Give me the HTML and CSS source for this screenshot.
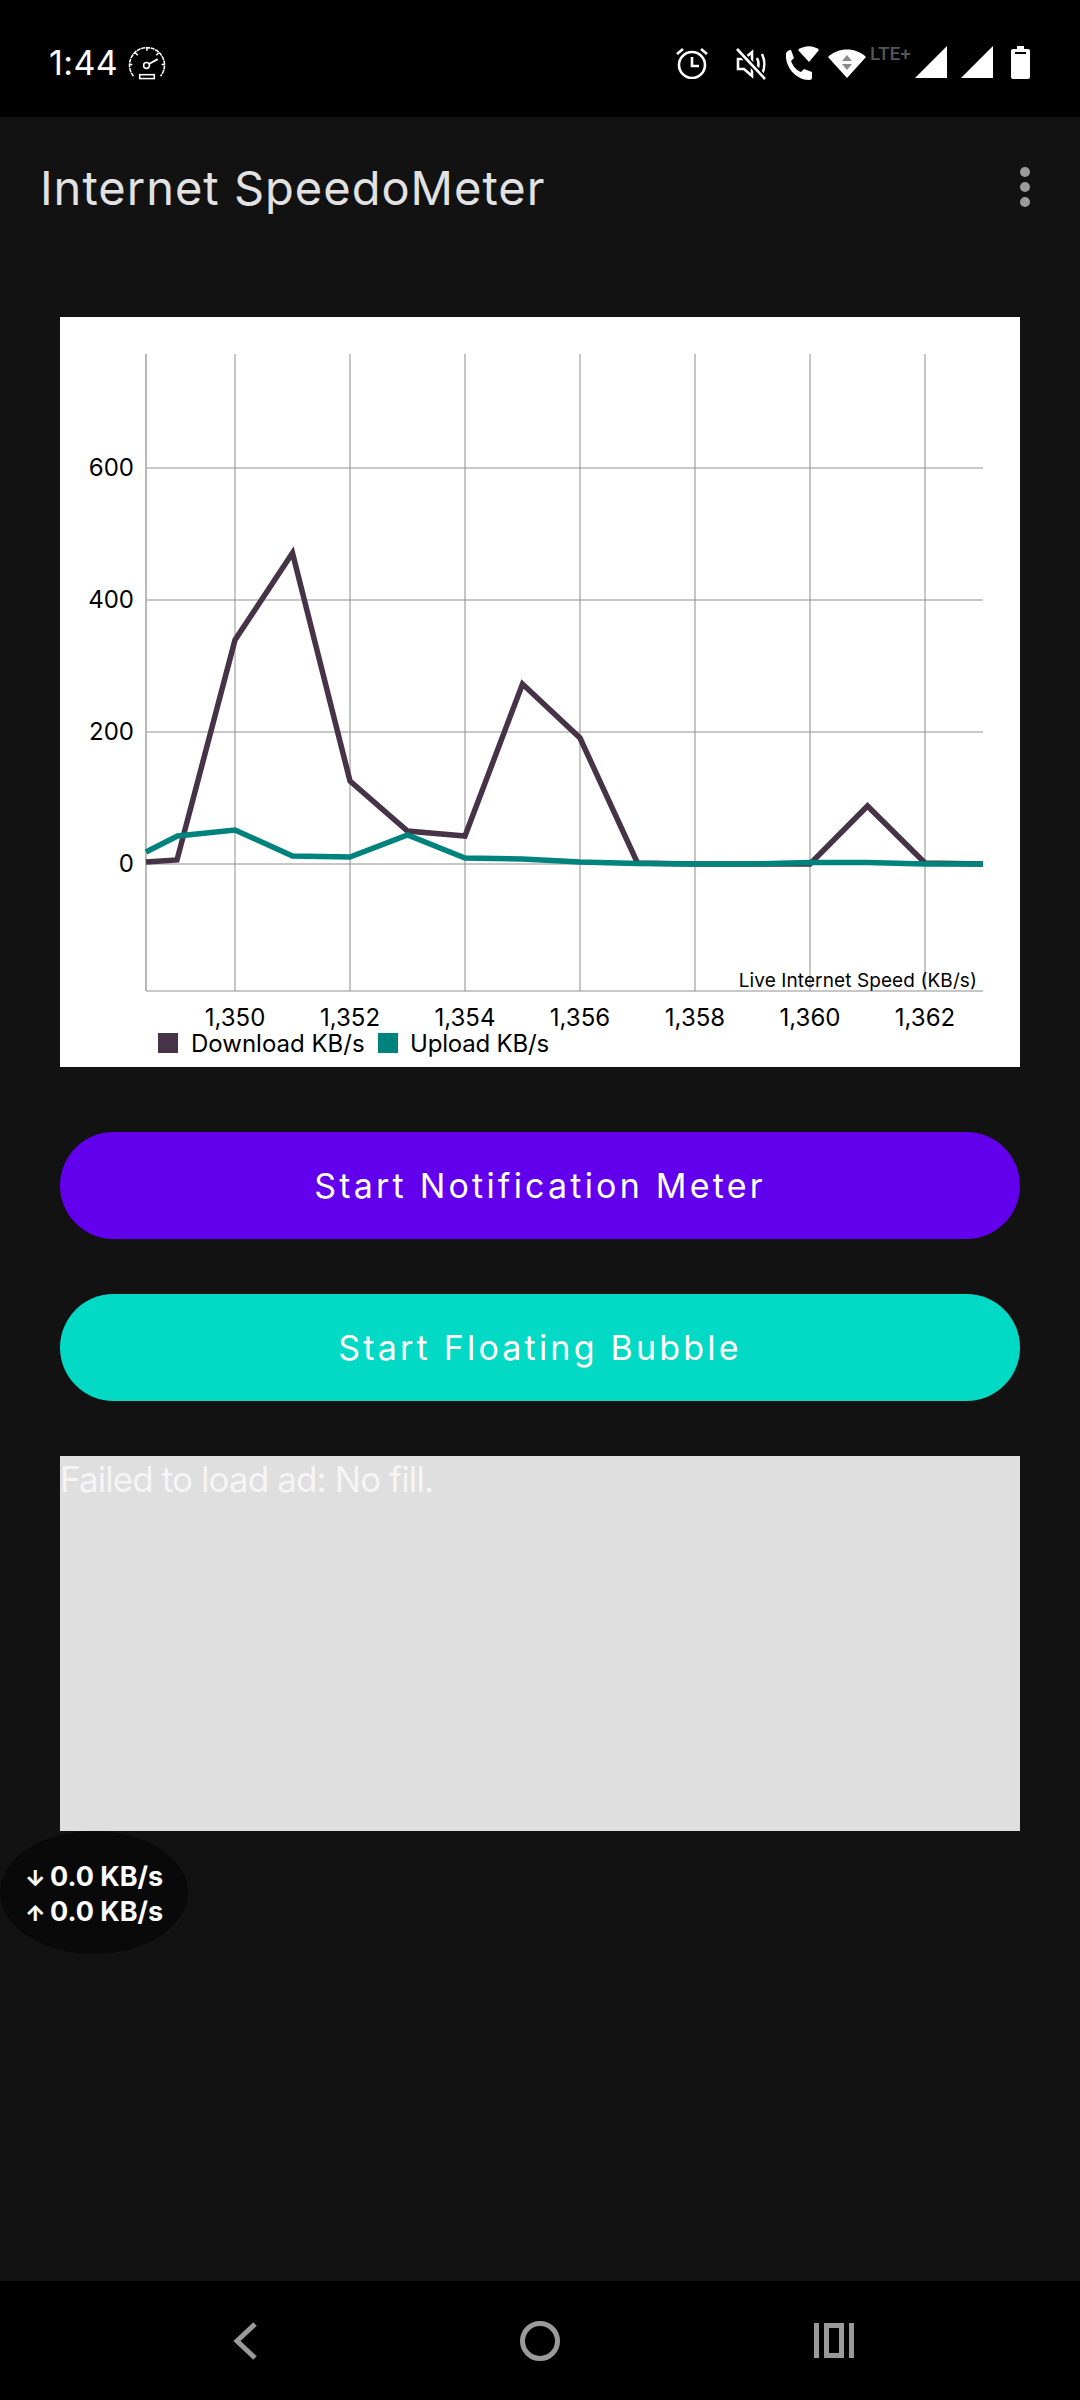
FILE: index.html
```html
<!DOCTYPE html>
<html lang="en">
<head>
  <meta charset="UTF-8">
  <meta name="viewport" content="width=device-width, initial-scale=1.0">
  <title>Internet SpeedoMeter</title>
  <link rel="stylesheet" href="styles.css">
</head>
<body>
  <div class="statusbar">
    <div class="status-left">
      <span class="clock">1:44</span>
      <svg class="ic-speed" viewBox="0 0 38 36" fill="none" stroke="#fff" stroke-width="1.6">
        <path d="M5 31 A18 18 0 1 1 33 31" stroke-dasharray="4.2 .7"/>
        <path d="M19 1v4M7 7l2.500 2.500M31 7l-2.500 2.500M1 19h3M37 19h-3"/>
        <circle cx="18.500" cy="20" r="3"/>
        <path d="M21 18.500l9-5" stroke-width="2"/>
        <rect x="11.500" y="29.500" width="15" height="4"/>
      </svg>
    </div>
    <div class="status-right">
      <svg class="ic-alarm" viewBox="0 0 32 32" fill="none" stroke="#fff" stroke-width="2.600">
        <circle cx="16" cy="18" r="13"/>
        <path d="M16 10v9h7M1 7l6-5M31 7l-6-5"/>
      </svg>
      <svg class="ic-mute" viewBox="0 0 32 32" fill="none" stroke="#fff" stroke-width="2.600">
        <path d="M2 11v10h6l8 7V4l-8 7z"/>
        <path d="M21 10c2 4 2 8 0 12M26 6c3 6 3 14 0 20"/>
        <path d="M1 1l28 30" stroke="#000" stroke-width="6"/>
        <path d="M1 1l28 30"/>
      </svg>
      <svg class="ic-call" viewBox="0 0 36 36" fill="#fff">
        <path d="M2 9c0-1.500 2-4 5-4l3 8-3 3c2 5 5 9 10 11l3-3 8 3v6c0 1-1 2-3 2C12 35 1 22 2 9z"/>
        <path d="M14 5c6-5 16-5 21 0L25 17z"/>
      </svg>
      <svg class="ic-wifi" viewBox="0 0 38 32">
        <path d="M0 11C10 1 28 1 38 11L19 32z" fill="#fff"/>
        <path d="M14 15l5-6 5 6zM14 18h10l-5 6z" fill="#8a8a8a"/>
      </svg>
      <span class="lte">LTE+</span>
      <svg class="ic-signal" viewBox="0 0 32 32"><path d="M0 32L32 0v32z" fill="#fff"/></svg>
      <svg class="ic-signal" viewBox="0 0 32 32"><path d="M0 32L32 0v32z" fill="#fff"/></svg>
      <svg class="ic-battery" viewBox="0 0 19 33">
        <path d="M6 0h7v3h4q2 0 2 2v26q0 2-2 2H2q-2 0-2-2V5q0-2 2-2h4z" fill="#fff"/>
        <rect x="4" y="6" width="11" height="2" fill="#000"/>
      </svg>
    </div>
  </div>

  <div class="appbar">
    <h1 class="app-title">Internet SpeedoMeter</h1>
    <div class="menu-dots"><i></i><i></i><i></i></div>
  </div>

  <div class="main">
    <div class="chart-card">
      <svg class="chart" viewBox="60 317 960 750">
        <g class="grid-v">
          <path d="M235 354V991M350 354V991M465 354V991M580 354V991M695 354V991M810 354V991M925 354V991"/>
        </g>
        <g class="grid-h">
          <path d="M146 468H983M146 600H983M146 732H983M146 864H983M146 991H983"/>
        </g>
        <path class="axis-left" d="M146 354V991"/>
        <polyline class="line-down" points="146,862 177,860 235,640 292.500,553 350,781 407.500,831 465,836 522.500,684 580,738 637.500,863 695,864 752.500,864 810,864 867.500,806 925,863 983,864"/>
        <polyline class="line-up" points="146,852 177.500,836 235,830 292.500,856 350,857 407.500,835 465,858 522.500,859 580,862 637.500,863.500 695,864 752.500,864 810,862.500 867.500,862.500 925,864 983,864"/>
        <g class="tick tick-y">
          <text x="134" y="476">600</text>
          <text x="134" y="608">400</text>
          <text x="134" y="740">200</text>
          <text x="134" y="872">0</text>
        </g>
        <g class="tick tick-x">
          <text x="235" y="1026">1,350</text>
          <text x="350" y="1026">1,352</text>
          <text x="465" y="1026">1,354</text>
          <text x="580" y="1026">1,356</text>
          <text x="695" y="1026">1,358</text>
          <text x="810" y="1026">1,360</text>
          <text x="925" y="1026">1,362</text>
        </g>
        <text class="chart-desc" x="977" y="987">Live Internet Speed (KB/s)</text>
        <rect class="key-down" x="158" y="1033" width="20" height="20"/>
        <text class="legend" x="191" y="1052">Download KB/s</text>
        <rect class="key-up" x="378" y="1033" width="20" height="20"/>
        <text class="legend legend-up" x="410" y="1052">Upload KB/s</text>
      </svg>
    </div>

    <button class="btn btn-purple">Start Notification Meter</button>
    <button class="btn btn-teal">Start Floating Bubble</button>

    <div class="ad-box">Failed to load ad: No fill.</div>
  </div>

  <div class="bubble">
    <div class="bubble-row"><span class="arrow">↓</span>0.0 KB/s</div>
    <div class="bubble-row"><span class="arrow">↑</span>0.0 KB/s</div>
  </div>

  <div class="navbar">
    <svg class="nav-back" viewBox="0 0 24 38" fill="none" stroke="#9a9a9a" stroke-width="5"><path d="M22 2L4 19l18 17"/></svg>
    <svg class="nav-home" viewBox="0 0 40 40" fill="none" stroke="#9a9a9a" stroke-width="5"><circle cx="20" cy="20" r="17.500"/></svg>
    <svg class="nav-recent" viewBox="0 0 40 35" fill="none" stroke="#9a9a9a" stroke-width="5"><path d="M2.500 0v35M37.500 0v35"/><rect x="12.500" y="2.500" width="15" height="30"/></svg>
  </div>
</body>
</html>
```

FILE: styles.css
```css
* {
  box-sizing: border-box;
}
body {
  font-family: Inter, "Open Sans", sans-serif;
  background-color: #121212;
  margin: 0;
  width: 1080px;
  height: 2400px;
  display: flex;
  flex-direction: column;
  position: relative;
  overflow: hidden;
}

/* status bar */
.statusbar {
  height: 117px;
  background-color: #000;
  display: flex;
  justify-content: space-between;
  align-items: flex-start;
  padding: 45px 50px 0 49px;
  flex-shrink: 0;
}
.status-left {
  display: flex;
  align-items: center;
  gap: 10px;
}
.clock {
  color: #fff;
  font-size: 34px;
  line-height: 36px;
  letter-spacing: .4px;
}
.ic-speed {
  width: 38px;
  height: 35px;
}
.status-right {
  display: flex;
  align-items: flex-start;
}
.ic-alarm {
  width: 32px;
  height: 32px;
  margin-top: 2px;
  margin-right: 28px;
}
.ic-mute {
  width: 32px;
  height: 32px;
  margin-top: 3px;
  margin-right: 16px;
}
.ic-call {
  width: 36px;
  height: 36px;
  margin-right: 8px;
}
.ic-wifi {
  width: 38px;
  height: 32px;
  margin-top: 1px;
  margin-right: 4px;
}
.lte {
  color: #555;
  font-family: Roboto, sans-serif;
  font-size: 19px;
  font-weight: 500;
  line-height: 18px;
  width: 45px;
  white-space: nowrap;
}
.ic-signal {
  width: 32px;
  height: 32px;
  margin-top: 1px;
  margin-right: 14px;
}
.ic-battery {
  width: 19px;
  height: 33px;
  margin-top: 1px;
  margin-left: 4px;
}

/* app bar */
.appbar {
  height: 140px;
  display: flex;
  justify-content: space-between;
  align-items: center;
  padding: 0 50px 0 40px;
  flex-shrink: 0;
}
.app-title {
  margin: 0;
  color: #e2e2e2;
  font-size: 47px;
  font-weight: 400;
  letter-spacing: 1px;
}
.menu-dots {
  display: flex;
  flex-direction: column;
  gap: 5px;
}
.menu-dots i {
  width: 10px;
  height: 10px;
  border-radius: 50%;
  background-color: #9b9b9b;
}

/* content */
.main {
  flex: 1;
  padding: 60px 60px 0;
  display: flex;
  flex-direction: column;
}
.chart-card {
  background-color: #fff;
  height: 750px;
  margin-bottom: 65px;
}
.chart {
  display: block;
  width: 960px;
  height: 750px;
}
.grid-v path {
  fill: none;
  stroke: #b4b4b4;
  stroke-width: 1.500;
}
.grid-h path {
  fill: none;
  stroke: #909090;
  stroke-width: 1.200;
}
.axis-left {
  stroke: #b8b8b8;
  stroke-width: 2;
}
.line-down,
.line-up {
  fill: none;
  stroke-width: 5.500;
}
.line-down {
  stroke: #463347;
}
.line-up {
  stroke: #00837d;
}
.tick {
  font-size: 24px;
  fill: #000;
}
.tick-y {
  text-anchor: end;
}
.tick-x {
  text-anchor: middle;
}
.chart-desc {
  font-size: 19px;
  fill: #000;
  text-anchor: end;
  letter-spacing: .1px;
}
.legend {
  font-size: 24px;
  fill: #000;
}
.legend-up {
  letter-spacing: -.2px;
}
.key-down {
  fill: #463347;
}
.key-up {
  fill: #00837d;
}
.btn {
  display: block;
  width: 100%;
  height: 107px;
  border: none;
  border-radius: 54px;
  color: #fff;
  font-family: inherit;
  font-size: 34px;
  letter-spacing: 3.200px;
  margin-bottom: 55px;
  padding: 0;
}
.btn-purple {
  background-color: #6200ee;
}
.btn-teal {
  background-color: #03dac5;
}
.ad-box {
  height: 375px;
  background-color: #dfdfdf;
  color: #f5f5f5;
  font-size: 35px;
  line-height: 46px;
  letter-spacing: -.9px;
}

/* floating speed bubble */
.bubble {
  position: absolute;
  left: 0;
  top: 1831px;
  width: 188px;
  height: 123px;
  border-radius: 50%;
  background-color: #090909;
  color: #fff;
  font-size: 27px;
  font-weight: 700;
  display: flex;
  flex-direction: column;
  justify-content: center;
  padding: 4px 0 0 25px;
}
.bubble-row {
  line-height: 33px;
  white-space: nowrap;
}
.arrow {
  display: inline-block;
  width: 25px;
  font-size: 22px;
  font-weight: 800;
}

/* nav bar */
.navbar {
  height: 119px;
  background-color: #000;
  display: flex;
  align-items: center;
  padding-left: 233px;
  flex-shrink: 0;
}
.nav-back {
  width: 24px;
  height: 38px;
  margin-right: 263px;
}
.nav-home {
  width: 40px;
  height: 40px;
  margin-right: 254px;
}
.nav-recent {
  width: 40px;
  height: 35px;
}
```
